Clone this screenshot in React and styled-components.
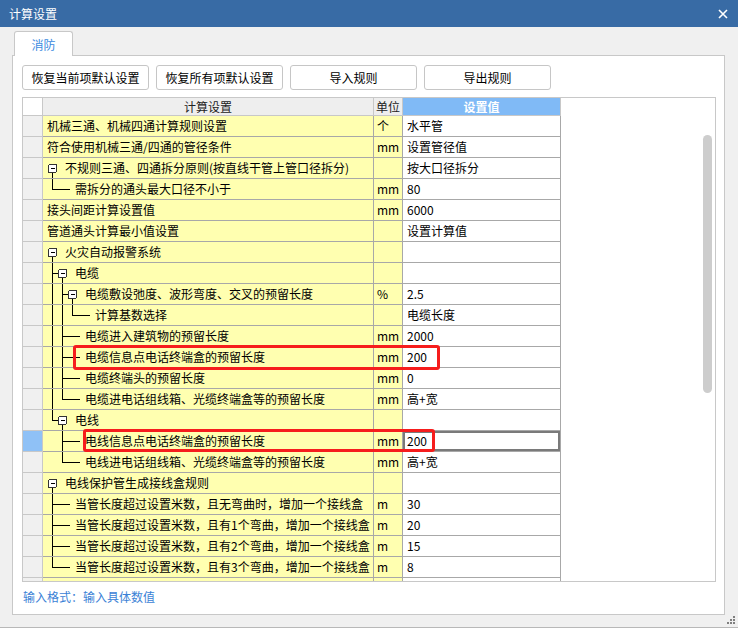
import React from 'react'
import styled, { createGlobalStyle } from 'styled-components'

const GlobalStyle = createGlobalStyle`
    html, body { margin: 0; padding: 0; }
    body {
        width: 738px;
        height: 628px;
        overflow: hidden;
        font-family: "Noto Sans CJK SC", "Microsoft YaHei", "Noto Sans", sans-serif;
        font-size: 12px;
        color: #000;
    }
`

const rows = [
    { name: '机械三通、机械四通计算规则设置', unit: '个', value: '水平管', top: true },
    { name: '符合使用机械三通/四通的管径条件', unit: 'mm', value: '设置管径值', top: true },
    { name: '不规则三通、四通拆分原则(按直线干管上管口径拆分)', value: '按大口径拆分', level: 0, box: true, lines: [] },
    { name: '需拆分的通头最大口径不小于', unit: 'mm', value: '80', level: 1, lines: ['end'] },
    { name: '接头间距计算设置值', unit: 'mm', value: '6000', top: true },
    { name: '管道通头计算最小值设置', value: '设置计算值', top: true },
    { name: '火灾自动报警系统', level: 0, box: true, lines: [] },
    { name: '电缆', level: 1, box: true, lines: ['mid'] },
    { name: '电缆敷设弛度、波形弯度、交叉的预留长度', unit: '%', value: '2.5', level: 2, box: true, lines: ['pass', 'mid'] },
    { name: '计算基数选择', value: '电缆长度', level: 3, lines: ['pass', 'pass', 'end'] },
    { name: '电缆进入建筑物的预留长度', unit: 'mm', value: '2000', level: 2, lines: ['pass', 'mid'] },
    { name: '电缆信息点电话终端盒的预留长度', unit: 'mm', value: '200', level: 2, lines: ['pass', 'mid'], mark: 'a' },
    { name: '电缆终端头的预留长度', unit: 'mm', value: '0', level: 2, lines: ['pass', 'mid'] },
    { name: '电缆进电话组线箱、光缆终端盒等的预留长度', unit: 'mm', value: '高+宽', level: 2, lines: ['pass', 'end'] },
    { name: '电线', level: 1, box: true, lines: ['end'] },
    { name: '电线信息点电话终端盒的预留长度', unit: 'mm', value: '200', level: 2, lines: ['none', 'mid'], selected: true, mark: 'b' },
    { name: '电线进电话组线箱、光缆终端盒等的预留长度', unit: 'mm', value: '高+宽', level: 2, lines: ['none', 'end'] },
    { name: '电线保护管生成接线盒规则', level: 0, box: true, lines: [] },
    { name: '当管长度超过设置米数，且无弯曲时，增加一个接线盒', unit: 'm', value: '30', level: 1, lines: ['mid'] },
    { name: '当管长度超过设置米数，且有1个弯曲，增加一个接线盒', unit: 'm', value: '20', level: 1, lines: ['mid'] },
    { name: '当管长度超过设置米数，且有2个弯曲，增加一个接线盒', unit: 'm', value: '15', level: 1, lines: ['mid'] },
    { name: '当管长度超过设置米数，且有3个弯曲，增加一个接线盒', unit: 'm', value: '8', level: 1, lines: ['end'] },
    { name: '', top: true },
]

// red annotation boxes, relative to the name cell
const marks = {
    a: { left: 30, top: -2, width: 367, height: 25 },
    b: { left: 40, top: -2, width: 352, height: 23 },
}

// tree connector drawing for one row
function TreeLines({ level, box, lines }) {
    const w = 22 + level * 10
    const parts = []
    lines.forEach((kind, i) => {
        const x = 9.5 + i * 10
        if (kind === 'pass' || kind === 'mid') parts.push(<line key={'v' + i} x1={x} y1={0} x2={x} y2={21} />)
        if (kind === 'end') parts.push(<line key={'v' + i} x1={x} y1={0} x2={x} y2={10.5} />)
    })
    if (level > 0) {
        const x = 9.5 + (level - 1) * 10
        const end = box ? 5 + level * 10 : w - 5
        parts.push(<line key="h" x1={x} y1={10.5} x2={end} y2={10.5} />)
    }
    if (box) {
        const bx = 5.5 + level * 10
        parts.push(<rect key="b" x={bx} y={6.5} width={8} height={8} rx={1.5} fill="#fff" stroke="#333" />)
        parts.push(<line key="m" x1={bx + 2} y1={10.5} x2={bx + 6} y2={10.5} />)
        parts.push(<line key="d" x1={bx + 4} y1={14.5} x2={bx + 4} y2={21} />)
    }
    return (
        <Gutter width={w} height={21} stroke="#000" strokeWidth={1} shapeRendering="crispEdges">
            {parts}
        </Gutter>
    )
}

export default function App() {
    return (
        <Window>
            <GlobalStyle />
            <TitleBar>
                <span>计算设置</span>
                <CloseIcon viewBox="0 0 10 10">
                    <path d="M1 1 L9 9 M9 1 L1 9" stroke="#fff" strokeWidth="1.6" />
                </CloseIcon>
            </TitleBar>
            <Content>
                <Tabs>
                    <Tab>消防</Tab>
                </Tabs>
                <Panel>
                    <Toolbar>
                        <Button>恢复当前项默认设置</Button>
                        <Button>恢复所有项默认设置</Button>
                        <Button>导入规则</Button>
                        <Button>导出规则</Button>
                    </Toolbar>
                    <GridBox>
                        <Table>
                            <colgroup>
                                <col style={{ width: 20 }} />
                                <col style={{ width: 331 }} />
                                <col style={{ width: 29 }} />
                                <col style={{ width: 158 }} />
                            </colgroup>
                            <thead>
                                <tr>
                                    <Corner />
                                    <HeadCell>计算设置</HeadCell>
                                    <HeadCell>单位</HeadCell>
                                    <HeadCell $active>设置值</HeadCell>
                                </tr>
                            </thead>
                            <tbody>
                                {rows.map((r, i) => (
                                    <Row key={i}>
                                        <RowHead $selected={r.selected} />
                                        <NameCell>
                                            <NameInner $top={r.top}>
                                                {!r.top && <TreeLines level={r.level} box={r.box} lines={r.lines} />}
                                                <span>{r.name}</span>
                                            </NameInner>
                                            {r.mark && <Mark style={marks[r.mark]} />}
                                        </NameCell>
                                        <UnitCell>{r.unit}</UnitCell>
                                        <ValueCell $selected={r.selected}>{r.value}</ValueCell>
                                    </Row>
                                ))}
                            </tbody>
                        </Table>
                        <ScrollTrack>
                            <Thumb />
                        </ScrollTrack>
                    </GridBox>
                    <Hint>输入格式：输入具体数值</Hint>
                </Panel>
            </Content>
            <Grip viewBox="0 0 10 10">
                <rect x="7" y="1" width="2" height="2" fill="#808080" />
                <rect x="4" y="4" width="2" height="2" fill="#808080" />
                <rect x="7" y="4" width="2" height="2" fill="#808080" />
                <rect x="1" y="7" width="2" height="2" fill="#808080" />
                <rect x="4" y="7" width="2" height="2" fill="#808080" />
                <rect x="7" y="7" width="2" height="2" fill="#808080" />
            </Grip>
        </Window>
    )
}

const Window = styled.div`
    position: relative;
    width: 738px;
    height: 628px;
    background: #f0f0f0;
    display: flex;
    flex-direction: column;
    box-sizing: border-box;
    border-bottom: 1px solid #b8b8b8;
`

const TitleBar = styled.div`
    height: 27px;
    background: #386ba5;
    color: #fff;
    font-size: 12px;
    display: flex;
    align-items: center;
    justify-content: space-between;
    padding: 0 10px 0 9px;
    flex-shrink: 0;
`

const CloseIcon = styled.svg`
    width: 10px;
    height: 10px;
`

const Content = styled.div`
    flex: 1;
    display: flex;
    flex-direction: column;
    padding: 4px 13px 12px 12px;
`

const Tabs = styled.div`
    display: flex;
    padding-left: 2px;
    margin-bottom: -1px;
    position: relative;
    z-index: 1;
`

const Tab = styled.div`
    width: 57px;
    height: 24px;
    background: #fff;
    border: 1px solid #c8c8c8;
    border-bottom: none;
    border-radius: 3px 3px 0 0;
    color: #3c8ae0;
    display: flex;
    align-items: center;
    justify-content: center;
    font-size: 12px;
`

const Panel = styled.div`
    flex: 1;
    background: #fff;
    border: 1px solid #c8c8c8;
    padding: 9px 9px 0 9px;
    display: flex;
    flex-direction: column;
`

const Toolbar = styled.div`
    display: flex;
    gap: 7px;
    margin-bottom: 7px;
`

const Button = styled.button`
    width: 127px;
    height: 25px;
    background: #fff;
    border: 1px solid #c6c6c6;
    border-radius: 3px;
    font-family: inherit;
    font-size: 12px;
    color: #000;
    padding: 0;
    cursor: pointer;
`

const GridBox = styled.div`
    position: relative;
    height: 485px;
    width: 694px;
    box-sizing: border-box;
    border: 1px solid #c8c8c8;
    overflow: hidden;
`

const Table = styled.table`
    border-collapse: collapse;
    table-layout: fixed;
    width: 538px;
    margin: -1px 0 0 -1px;
`

const Corner = styled.th`
    height: 17px;
    background: #fff;
    border: 1px solid #c8c8c8;
    padding: 0;
`

const HeadCell = styled.th`
    height: 17px;
    padding: 0;
    border: 1px solid #c8c8c8;
    background: ${p => (p.$active ? '#80baf6' : '#eeeeee')};
    color: ${p => (p.$active ? '#fff' : '#222')};
    font-weight: ${p => (p.$active ? 'bold' : 'normal')};
    font-size: 12px;
    line-height: 16px;
    text-align: center;
    white-space: nowrap;
    overflow: hidden;
`

const Row = styled.tr`
    height: 21px;
`

const Cell = styled.td`
    height: 20px;
    padding: 0;
    border: 1px solid #a8a8a8;
    white-space: nowrap;
    overflow: hidden;
    line-height: 20px;
    font-size: 12px;
`

const RowHead = styled(Cell)`
    background: ${p => (p.$selected ? '#8fc1f6' : '#f0f0f0')};
    border-color: #c8c8c8;
`

const NameCell = styled(Cell)`
    position: relative;
    overflow: visible;
    background: #ffffb0;
`

const NameInner = styled.div`
    display: flex;
    align-items: center;
    height: 20px;
    padding-left: ${p => (p.$top ? '4px' : '0')};
    overflow: hidden;
`

const Gutter = styled.svg`
    flex-shrink: 0;
    display: block;
    margin-top: 1px;
`

const UnitCell = styled(Cell)`
    background: #ffffb0;
    padding-left: 3px;
`

const ValueCell = styled(Cell)`
    background: #fff;
    padding-left: 4px;
    ${p => p.$selected && `
        box-shadow: inset 0 0 0 2px #7a7a7a;
    `}
`

const Mark = styled.div`
    position: absolute;
    box-sizing: border-box;
    border: 3px solid #f61d1d;
    border-radius: 3px;
    pointer-events: none;
    z-index: 2;
`

const ScrollTrack = styled.div`
    position: absolute;
    right: 3px;
    top: 37px;
    width: 9px;
    height: 258px;
`

const Thumb = styled.div`
    width: 100%;
    height: 100%;
    background: #cdcdcd;
    border-radius: 5px;
`

const Hint = styled.div`
    color: #3b82d6;
    font-size: 12px;
    padding: 6px 0 0 1px;
`

const Grip = styled.svg`
    position: absolute;
    right: 2px;
    bottom: 2px;
    width: 10px;
    height: 10px;
`
